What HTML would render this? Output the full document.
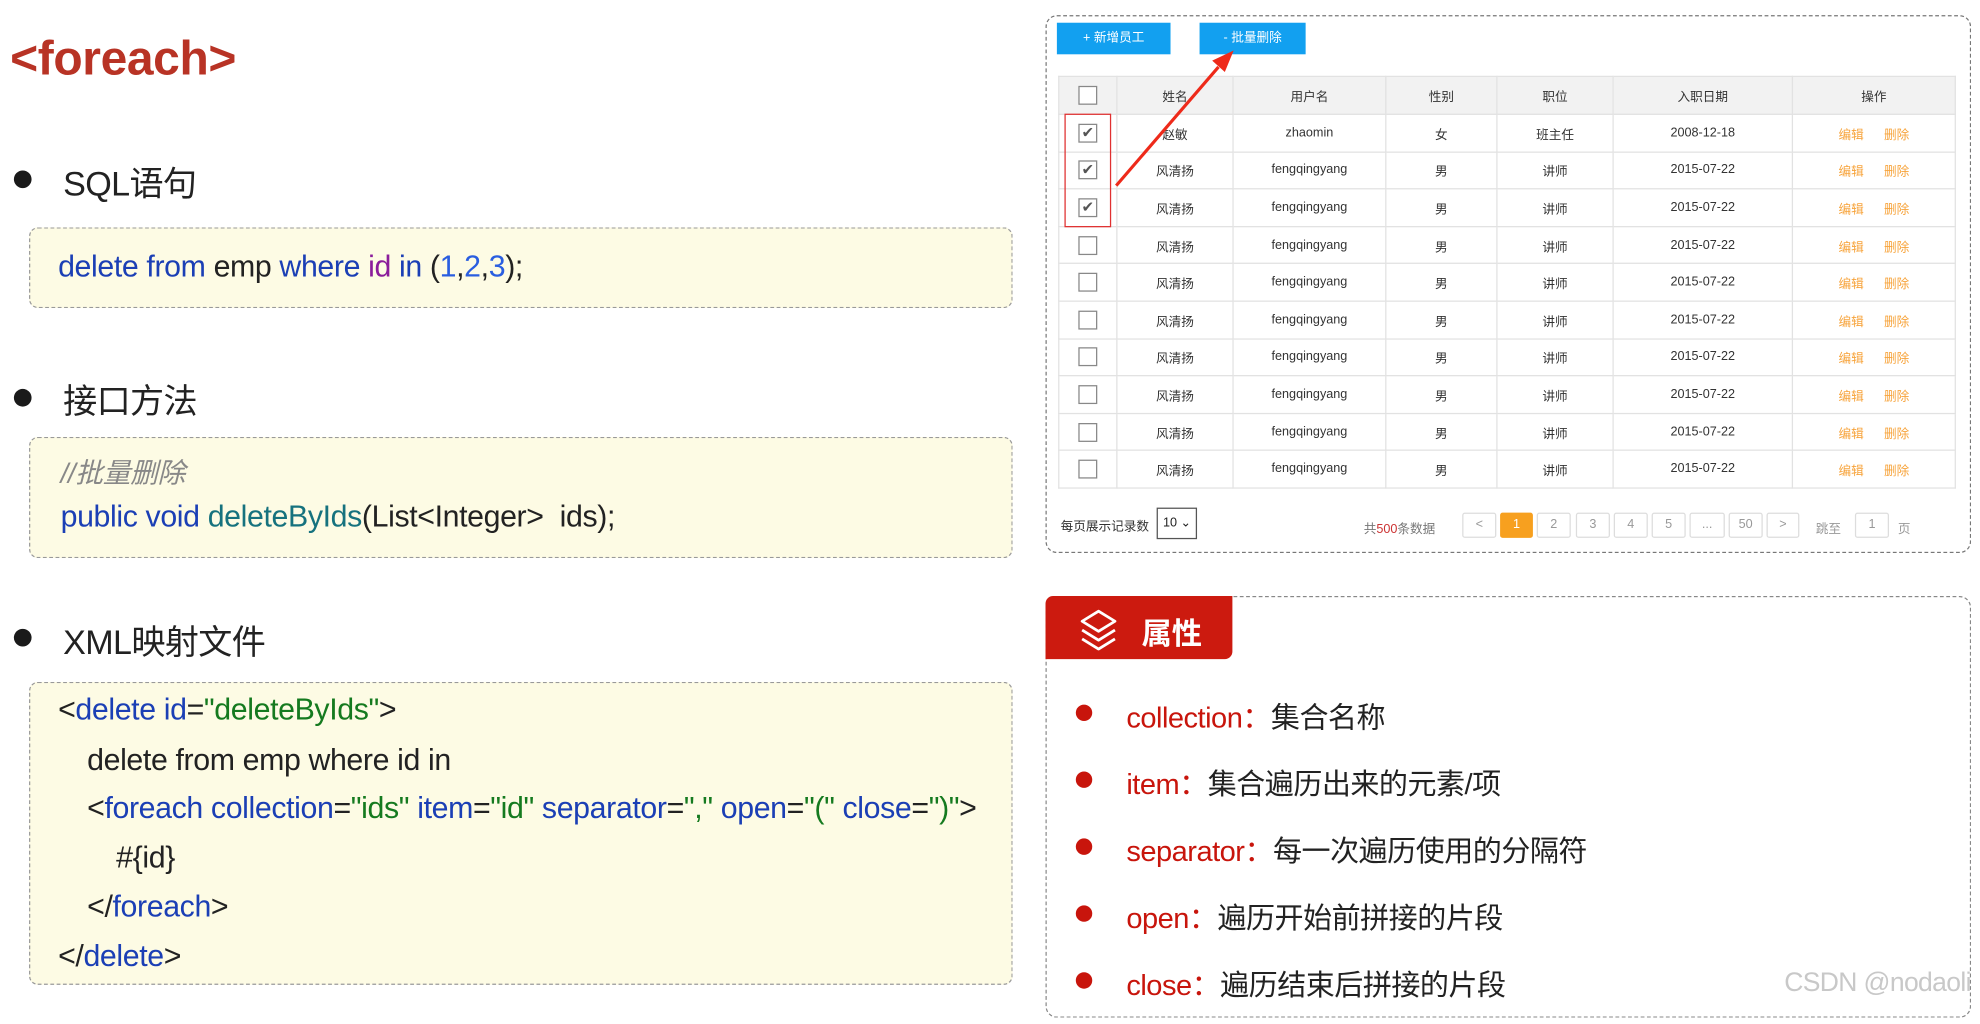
<!DOCTYPE html>
<html><head><meta charset="utf-8"><style>
*{margin:0;padding:0;box-sizing:border-box}
html,body{width:1980px;height:1024px;overflow:hidden;background:#fff}
#w{position:absolute;left:0;top:0;width:1568px;height:811px;transform:scale(1.2627);transform-origin:0 0;font-family:"Liberation Sans","Noto Sans CJK SC",sans-serif;color:#222}
.a{position:absolute;white-space:nowrap}
.dot{position:absolute;width:14px;height:14px;border-radius:50%;background:#1a1a1a}
.h{font-size:27px;color:#222;letter-spacing:-0.5px}
.box{position:absolute;left:23px;width:779px;background:#fdfbe4;border:1px dashed #999;border-radius:7px}
.code{font-size:24px;letter-spacing:-0.3px}
.b{color:#1b3fb5}.g{color:#157a1f}.p{color:#8b1c9b}.n{color:#2a5ee0}.t{color:#16727e}
table{border-collapse:collapse;position:absolute;left:838px;top:60px;width:711px;font-size:10px;color:#333;text-align:center}
td,th{border:1px solid #e2e2e2;height:29.6px;font-weight:normal;vertical-align:middle}
th{background:#f2f2f2;height:30px}
.cb{display:inline-block;width:15px;height:15px;border:1px solid #888;background:#fff;vertical-align:middle;position:relative;font-size:12px;line-height:13px;color:#555}
.o{color:#f7a33a;margin:0 8px}
.pg{position:absolute;top:406px;height:20px;border:1px solid #ddd;font-size:10px;color:#999;text-align:center;line-height:18px;border-radius:2px}
.li{position:absolute;left:852px;font-size:23px;letter-spacing:-0.4px;color:#222}
.li i{position:absolute;left:0;top:9px;width:13px;height:13px;border-radius:50%;background:#c8150c}
.li span{color:#c8150c}
</style></head><body><div id="w">
<div class="a" style="left:8px;top:26px;font-size:38px;font-weight:bold;color:#b83325;letter-spacing:-0.3px">&lt;foreach&gt;</div>

<div class="dot" style="left:11px;top:135px"></div><div class="a h" style="left:50px;top:124px">SQL语句</div>
<div class="box" style="top:180px;height:64px"><div class="a code" style="left:22px;top:17px"><span class="b">delete from</span> emp <span class="b">where</span> <span class="p">id</span> <span class="b">in</span> (<span class="n">1</span>,<span class="n">2</span>,<span class="n">3</span>);</div></div>

<div class="dot" style="left:11px;top:308px"></div><div class="a h" style="left:50px;top:296px">接口方法</div>
<div class="box" style="top:346px;height:96px">
<div class="a code" style="left:24px;top:10px;color:#888;font-style:italic;font-size:22px">//批量删除</div>
<div class="a code" style="left:24px;top:49px"><span class="b">public void</span> <span class="t">deleteByIds</span>(List&lt;Integer&gt;&nbsp; ids);</div></div>

<div class="dot" style="left:11px;top:498px"></div><div class="a h" style="left:50px;top:487px">XML映射文件</div>
<div class="box" style="top:540px;height:240px">
<div class="a code" style="left:22px;top:8px">&lt;<span class="b">delete id</span>=<span class="g">"deleteByIds"</span>&gt;</div>
<div class="a code" style="left:45px;top:48px">delete from emp where id in</div>
<div class="a code" style="left:45px;top:86px">&lt;<span class="b">foreach collection</span>=<span class="g">"ids"</span> <span class="b">item</span>=<span class="g">"id"</span> <span class="b">separator</span>=<span class="g">","</span> <span class="b">open</span>=<span class="g">"("</span> <span class="b">close</span>=<span class="g">")"</span>&gt;</div>
<div class="a code" style="left:68px;top:125px">#{id}</div>
<div class="a code" style="left:45px;top:164px">&lt;/<span class="b">foreach</span>&gt;</div>
<div class="a code" style="left:22px;top:203px">&lt;/<span class="b">delete</span>&gt;</div>
</div>

<div class="a" style="left:828px;top:12px;width:733px;height:426px;border:1px dashed #777;border-radius:9px"></div>
<div class="a" style="left:837px;top:18px;width:90px;height:25px;background:#12a0f0;color:#fff;font-size:10px;text-align:center;line-height:25px">+ 新增员工</div>
<div class="a" style="left:950px;top:18px;width:84px;height:25px;background:#12a0f0;color:#fff;font-size:10px;text-align:center;line-height:25px">- 批量删除</div>
<table>
<tr><th style="width:46px"><span class="cb"></span></th><th style="width:92px">姓名</th><th style="width:121px">用户名</th><th style="width:88px">性别</th><th style="width:92px">职位</th><th style="width:142px">入职日期</th><th>操作</th></tr>
<tr><td><span class="cb">✔</span></td><td>赵敏</td><td>zhaomin</td><td>女</td><td>班主任</td><td>2008-12-18</td><td><span class="o">编辑</span><span class="o">删除</span></td></tr>
<tr><td><span class="cb">✔</span></td><td>风清扬</td><td>fengqingyang</td><td>男</td><td>讲师</td><td>2015-07-22</td><td><span class="o">编辑</span><span class="o">删除</span></td></tr>
<tr><td><span class="cb">✔</span></td><td>风清扬</td><td>fengqingyang</td><td>男</td><td>讲师</td><td>2015-07-22</td><td><span class="o">编辑</span><span class="o">删除</span></td></tr>
<tr><td><span class="cb"></span></td><td>风清扬</td><td>fengqingyang</td><td>男</td><td>讲师</td><td>2015-07-22</td><td><span class="o">编辑</span><span class="o">删除</span></td></tr>
<tr><td><span class="cb"></span></td><td>风清扬</td><td>fengqingyang</td><td>男</td><td>讲师</td><td>2015-07-22</td><td><span class="o">编辑</span><span class="o">删除</span></td></tr>
<tr><td><span class="cb"></span></td><td>风清扬</td><td>fengqingyang</td><td>男</td><td>讲师</td><td>2015-07-22</td><td><span class="o">编辑</span><span class="o">删除</span></td></tr>
<tr><td><span class="cb"></span></td><td>风清扬</td><td>fengqingyang</td><td>男</td><td>讲师</td><td>2015-07-22</td><td><span class="o">编辑</span><span class="o">删除</span></td></tr>
<tr><td><span class="cb"></span></td><td>风清扬</td><td>fengqingyang</td><td>男</td><td>讲师</td><td>2015-07-22</td><td><span class="o">编辑</span><span class="o">删除</span></td></tr>
<tr><td><span class="cb"></span></td><td>风清扬</td><td>fengqingyang</td><td>男</td><td>讲师</td><td>2015-07-22</td><td><span class="o">编辑</span><span class="o">删除</span></td></tr>
<tr><td><span class="cb"></span></td><td>风清扬</td><td>fengqingyang</td><td>男</td><td>讲师</td><td>2015-07-22</td><td><span class="o">编辑</span><span class="o">删除</span></td></tr>
</table>
<div class="a" style="left:843px;top:90px;width:37px;height:90px;border:1.5px solid #e03030"></div>
<svg class="a" style="left:0;top:0" width="1568" height="811"><line x1="884" y1="147" x2="965" y2="53" stroke="#ee2a1a" stroke-width="2.5"/><polygon points="977,40 960,48 970,57" fill="#ee2a1a"/></svg>
<div class="a" style="left:840px;top:408px;font-size:10px;color:#333">每页展示记录数</div>
<div class="a" style="left:916px;top:402px;width:32px;height:25px;border:1px solid #555;font-size:10px;line-height:23px;padding-left:4px">10 ⌄</div>
<div class="a" style="left:1080px;top:410px;font-size:10px;color:#777">共<span style="color:#c33">500</span>条数据</div>
<div class="pg" style="left:1158px;width:27px">&lt;</div>
<div class="pg" style="left:1188px;width:26px;background:#f7a01f;border-color:#f7a01f;color:#fff">1</div>
<div class="pg" style="left:1217px;width:27px">2</div>
<div class="pg" style="left:1248px;width:27px">3</div>
<div class="pg" style="left:1278px;width:27px">4</div>
<div class="pg" style="left:1308px;width:27px">5</div>
<div class="pg" style="left:1338px;width:28px">...</div>
<div class="pg" style="left:1369px;width:27px">50</div>
<div class="pg" style="left:1399px;width:26px">&gt;</div>
<div class="a" style="left:1438px;top:410px;font-size:10px;color:#999">跳至</div>
<div class="pg" style="left:1469px;width:27px">1</div>
<div class="a" style="left:1503px;top:410px;font-size:10px;color:#999">页</div>

<div class="a" style="left:828px;top:472px;width:733px;height:334px;border:1px dashed #888;border-radius:9px"></div>
<div class="a" style="left:828px;top:472px;width:148px;height:50px;background:#cc1a0f;border-radius:6px 0 6px 0"></div>
<svg class="a" style="left:853px;top:481px" width="34" height="38" viewBox="0 0 34 38" fill="none" stroke="#fff" stroke-width="2.2" stroke-linejoin="round"><path d="M17 3 L30 11 L17 19 L4 11 Z"/><path d="M4 18 L17 26 L30 18"/><path d="M4 25 L17 33 L30 25"/></svg>
<div class="a" style="left:904px;top:482px;font-size:24px;font-weight:bold;color:#fff">属性</div>
<div class="li" style="top:549px"><i></i><span style="margin-left:40px">collection：</span>集合名称</div>
<div class="li" style="top:602px"><i></i><span style="margin-left:40px">item：</span>集合遍历出来的元素/项</div>
<div class="li" style="top:655px"><i></i><span style="margin-left:40px">separator：</span>每一次遍历使用的分隔符</div>
<div class="li" style="top:708px"><i></i><span style="margin-left:40px">open：</span>遍历开始前拼接的片段</div>
<div class="li" style="top:761px"><i></i><span style="margin-left:40px">close：</span>遍历结束后拼接的片段</div>
<div class="a" style="left:1413px;top:767px;font-size:21px;color:#c8c8c8;letter-spacing:-0.5px">CSDN @nodaoli</div>
</div></body></html>
